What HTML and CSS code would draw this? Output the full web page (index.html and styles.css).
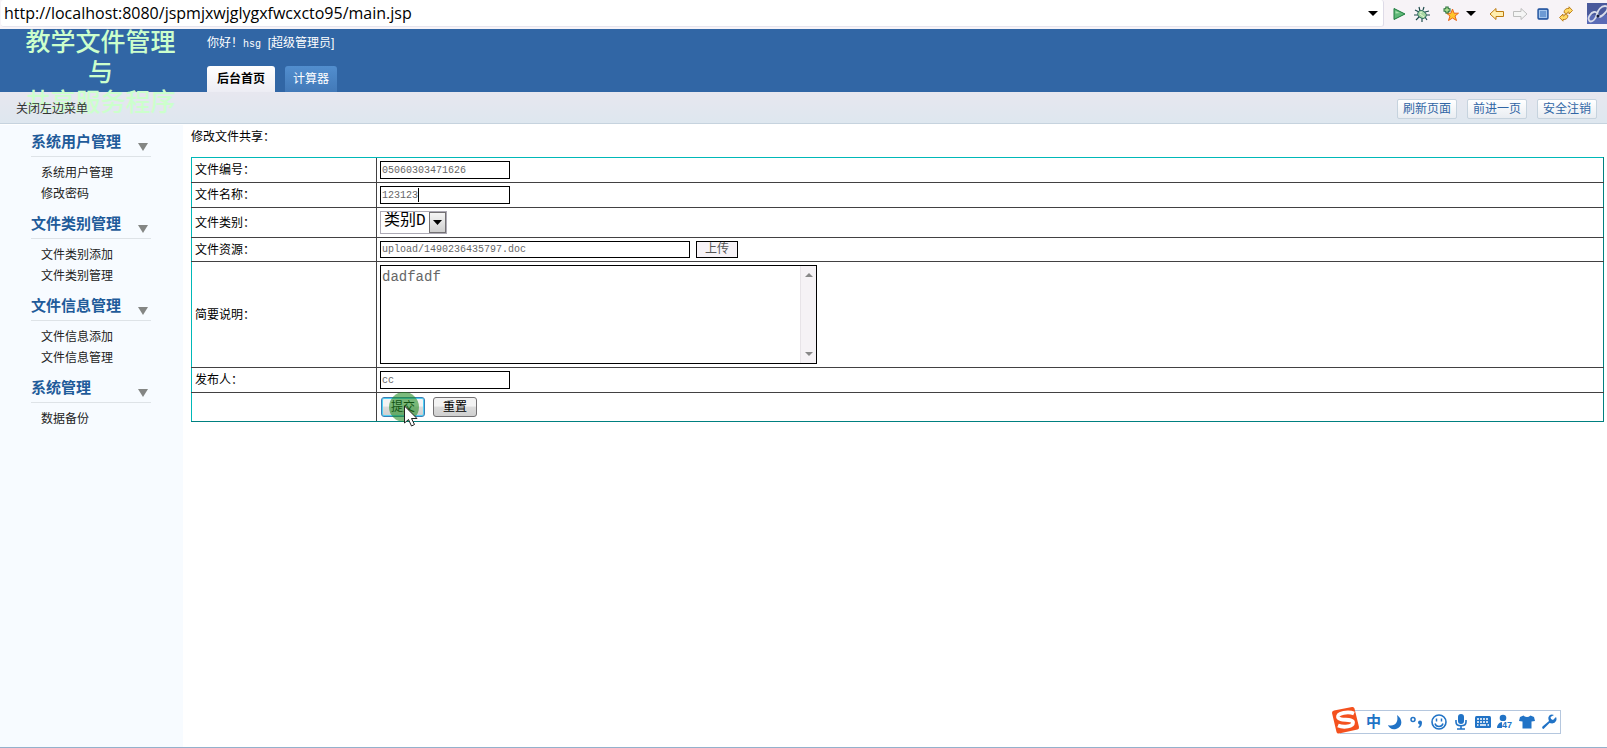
FILE: index.html
```html
<!DOCTYPE html>
<html lang="zh-CN">
<head>
    <meta charset="UTF-8">
    <meta name="viewport" content="width=device-width, initial-scale=1.0">
    <title>教学文件管理与共享服务程序</title>
    <link rel="stylesheet" href="styles.css">
</head>
<body>
    <!-- Address bar -->
    <div class="browser-bar">
        <div class="address">
            <input type="text" class="address-input" aria-label="URL" value="http://localhost:8080/jspmjxwjglygxfwcxcto95/main.jsp">
            <button type="button" class="tool" aria-label="History"><svg width="10" height="5" viewBox="0 0 10 5"><path d="M0 0h10L5 5z"/></svg></button>
        </div>
        <div class="tools">
            <button type="button" class="tool" aria-label="Go">
                <svg width="16" height="16" viewBox="0 0 16 16"><path d="M3 2.5v11L14 8z" fill="#5fb878" stroke="#1c7a3c"/><path d="M4.500 5v2.500L9 7z" fill="#a8e0ae"/></svg>
            </button>
            <button type="button" class="tool" aria-label="Debug">
                <svg width="16" height="16" viewBox="0 0 16 16"><path d="M5 1l1 4M10 1L9 4M1 4l4 2M15 5l-4 1M0 9h4M16 9h-4M2 14l3-3M8 16v-4M13 14l-2-3" fill="none" stroke="#1e4b4c" stroke-width="1.200"/><ellipse cx="8" cy="8.500" rx="4.500" ry="3.600" transform="rotate(35 8 8.500)" fill="#a9d8a4" stroke="#26645a"/><path d="M6 8l4 3M6 7l2-1" stroke="#e4f5d4"/></svg>
            </button>
            <div class="tool-group">
                <button type="button" class="tool" aria-label="Add favorite">
                    <svg width="16" height="16" viewBox="0 0 16 16"><path d="M9.500 3l1.500 4.200h4.500l-3.500 2.800 1.500 4.500-4-2.500-4 2.500L7 10 3.500 7.200H8z" fill="#ffc52b" stroke="#e8661c"/><path d="M4 0.500v7M0.500 4h7" stroke="#28713a" stroke-width="3.400"/><path d="M4 1.500v5M1.500 4h5" stroke="#b8e596" stroke-width="1.300"/></svg>
                </button>
                <button type="button" class="tool" aria-label="Favorites"><svg width="10" height="5" viewBox="0 0 10 5"><path d="M0 0h10L5 5z"/></svg></button>
            </div>
            <div class="tool-group">
                <button type="button" class="tool" aria-label="Back">
                    <svg width="16" height="16" viewBox="0 0 16 16"><path d="M1 8l6-5.500v3h7.500v5H7v3z" fill="#ffeeb0" stroke="#bd7b10" stroke-linejoin="round"/></svg>
                </button>
                <button type="button" class="tool" aria-label="Forward">
                    <svg width="16" height="16" viewBox="0 0 16 16"><path d="M15 8L9 2.500v3H1.500v5H9v3z" fill="#f5f5f5" stroke="#bebebe" stroke-linejoin="round"/></svg>
                </button>
                <button type="button" class="tool" aria-label="Stop">
                    <svg width="16" height="16" viewBox="0 0 16 16"><rect x="3" y="3" width="10" height="10" rx="1" fill="#6d9ad4" stroke="#1d4e9a" stroke-width="1.300"/><rect x="4.500" y="4.500" width="7" height="7" fill="none" stroke="#a4c5ec"/></svg>
                </button>
                <button type="button" class="tool" aria-label="Refresh">
                    <svg width="16" height="16" viewBox="0 0 16 16"><path d="M6 6.500c0-3 2.500-4.500 5-4V.8l3.500 3.700L11 8V6c-1.500 0-2 .5-2 2zM10 9.500c0 3-2.500 4.500-5 4v1.700L1.500 11.500 5 8v2c1.500 0 2-.5 2-2z" fill="#ffda65" stroke="#b87814" stroke-width=".9" stroke-linejoin="round"/></svg>
                </button>
            </div>
            <svg class="brand" width="20" height="21" viewBox="0 0 20 21"><rect width="20" height="21" fill="#4a5a9c"/><path d="M0 12h20v9H0z" fill="#5a6bb5"/><path d="M2 18c4 2 7-3 8-7S14 3 18 3s3 4 0 7-5 5-7 3M11 12C9 7 5 9 3 12s-2 5 0 6" fill="none" stroke="#d8dcea" stroke-width="1.800"/><circle cx="11" cy="13" r="1.500" fill="#101838"/></svg>
        </div>
    </div>

    <header class="header">
        <h1 class="logo">教学文件管理<br>与<br>共享服务程序</h1>
        <div class="header-main">
            <p class="greeting">你好！<span class="latin">hsg</span>&nbsp; [超级管理员]</p>
            <nav class="tabs">
                <a href="#" class="tab active">后台首页</a>
                <a href="#" class="tab">计算器</a>
            </nav>
        </div>
    </header>

    <div class="subbar">
        <a href="#" class="toggle-menu">关闭左边菜单</a>
        <div class="actions">
            <button type="button" class="action-btn">刷新页面</button>
            <button type="button" class="action-btn">前进一页</button>
            <button type="button" class="action-btn">安全注销</button>
        </div>
    </div>

    <div class="content">
        <aside class="sidebar">
            <section class="menu">
                <h2 class="menu-title">系统用户管理<span class="arrow"></span></h2>
                <ul class="menu-list">
                    <li><a href="#">系统用户管理</a></li>
                    <li><a href="#">修改密码</a></li>
                </ul>
            </section>
            <section class="menu">
                <h2 class="menu-title">文件类别管理<span class="arrow"></span></h2>
                <ul class="menu-list">
                    <li><a href="#">文件类别添加</a></li>
                    <li><a href="#">文件类别管理</a></li>
                </ul>
            </section>
            <section class="menu">
                <h2 class="menu-title">文件信息管理<span class="arrow"></span></h2>
                <ul class="menu-list">
                    <li><a href="#">文件信息添加</a></li>
                    <li><a href="#">文件信息管理</a></li>
                </ul>
            </section>
            <section class="menu">
                <h2 class="menu-title">系统管理<span class="arrow"></span></h2>
                <ul class="menu-list">
                    <li><a href="#">数据备份</a></li>
                </ul>
            </section>
        </aside>

        <main class="main">
            <p class="page-title">修改文件共享：</p>
            <form onsubmit="return false">
                <table class="form-table">
                    <tr>
                        <td><label for="bianhao">文件编号：</label></td>
                        <td><input type="text" id="bianhao" class="field" value="05060303471626"></td>
                    </tr>
                    <tr>
                        <td><label for="mingcheng">文件名称：</label></td>
                        <td><span class="field-wrap"><input type="text" id="mingcheng" class="field" value="123123"><span class="caret"></span></span></td>
                    </tr>
                    <tr class="row-select">
                        <td><label for="leibie">文件类别：</label></td>
                        <td>
                            <span class="select-wrap">
                                <select id="leibie" class="select"><option>类别D</option></select>
                                <span class="select-btn"><svg width="9" height="5" viewBox="0 0 9 5"><path d="M0 0h9L4.500 5z"/></svg></span>
                            </span>
                        </td>
                    </tr>
                    <tr class="row-file">
                        <td><label for="ziyuan">文件资源：</label></td>
                        <td>
                            <div class="cell-row">
                                <input type="text" id="ziyuan" class="field field-long" value="upload/1490236435797.doc">
                                <button type="button" class="upload-btn">上传</button>
                            </div>
                        </td>
                    </tr>
                    <tr>
                        <td><label for="shuoming">简要说明：</label></td>
                        <td>
                            <div class="area-wrap">
                                <textarea id="shuoming" class="area">dadfadf</textarea>
                                <span class="scroll">
                                    <svg width="8" height="4" viewBox="0 0 8 4"><path d="M0 4h8L4 0z" fill="#888"/></svg>
                                    <svg width="8" height="4" viewBox="0 0 8 4"><path d="M0 0h8L4 4z" fill="#888"/></svg>
                                </span>
                            </div>
                        </td>
                    </tr>
                    <tr>
                        <td><label for="faburen">发布人：</label></td>
                        <td><input type="text" id="faburen" class="field" value="cc"></td>
                    </tr>
                    <tr class="row-submit">
                        <td></td>
                        <td>
                            <div class="buttons">
                                <div class="submit-wrap">
                                    <button type="submit" class="btn btn-focus">提交</button>
                                    <svg class="pointer" width="30" height="36" viewBox="0 0 30 36"><circle cx="15" cy="15" r="15" fill="#1f8b1f" fill-opacity=".58"/><path d="M15.500 14v17l4-3.500 3 6.500 3-1.500-3-6h5.500z" fill="#fff" stroke="#222"/></svg>
                                </div>
                                <button type="reset" class="btn">重置</button>
                            </div>
                        </td>
                    </tr>
                </table>
            </form>
        </main>
    </div>

    <!-- Input method bar -->
    <div class="ime">
        <svg class="ime-logo" width="30" height="28" viewBox="0 0 30 28"><path d="M4 4.500L22 1q2-.4 2.500 1.500L29 21q.3 2-1.500 2.500L9 27.500q-2 .3-2.500-1.500L2 7q-.3-2 2-2.500z" fill="#f4511e"/><path d="M24 7.500C18 5 7.500 7 8 11c.7 4.500 15 1 15 5.500 0 4-9 5.500-15 3" fill="none" stroke="#fff" stroke-width="3.800"/></svg>
        <span class="ime-lang">中</span>
        <svg width="16" height="16" viewBox="0 0 16 16"><path d="M10 1c6 4 6 12-1 14-4 1-7-1-8-4 6 2 11-2 9-10z" fill="#2173c6"/></svg>
        <svg width="16" height="16" viewBox="0 0 16 16"><circle cx="4" cy="5.500" r="2" fill="none" stroke="#2173c6" stroke-width="1.500"/><path d="M9 8.500a2 2 0 1 1 4 0q0 4-3 5.500l-1-1q2-1 1.500-2.500Q9 10 9 8.500z" fill="#2173c6"/></svg>
        <svg width="16" height="16" viewBox="0 0 16 16"><circle cx="8" cy="8" r="7" fill="none" stroke="#2173c6" stroke-width="1.600"/><path d="M5.500 4.500v3M10.500 4.500v3M4 9.500c1 4 7 4 8 0" fill="none" stroke="#2173c6" stroke-width="1.500"/></svg>
        <svg width="16" height="16" viewBox="0 0 16 16"><rect x="5" y="0" width="6" height="10" rx="3" fill="#2173c6"/><path d="M3 6v2c0 5 10 5 10 0V6M8 12v3M4 15h8" fill="none" stroke="#2173c6" stroke-width="1.600"/></svg>
        <svg width="16" height="16" viewBox="0 0 16 16"><rect y="2" width="16" height="12" rx="1.500" fill="#2173c6"/><path d="M2 5h12M2 8h12" stroke="#fff" stroke-width="1.600" stroke-dasharray="2 1"/><path d="M2 11h1.500M5 11h6M12.500 11H14" stroke="#fff" stroke-width="1.600"/></svg>
        <span class="ime-user"><svg width="16" height="16" viewBox="0 0 16 16"><circle cx="6" cy="4" r="3.300" fill="#2173c6"/><path d="M0 14c0-8 12-8 12-2v2z" fill="#2173c6"/></svg><span class="ime-count">47</span></span>
        <svg width="16" height="16" viewBox="0 0 16 16"><path d="M4.500 1.500q3.500 3 7 0L15 3l1 4-3.500.5v7h-9v-7L0 7l1-4z" fill="#2173c6"/></svg>
        <svg width="16" height="16" viewBox="0 0 16 16"><path d="M13 1q-4-1.500-5.500 2Q7 5 8 7l-6.500 5.500q-1 2 1 2.500l6-6q5 1.500 6.500-2 1-2 0-4l-3 3-2-1-.5-2z" fill="#2173c6"/></svg>
    </div>
</body>
</html>
```
FILE: styles.css
```css
* {
    box-sizing: border-box;
}
body {
    margin: 0;
    min-height: 100vh;
    display: flex;
    flex-direction: column;
    background: #fff;
    border-bottom: 1px solid #94b1cc;
    color: #000;
    font-family: "Liberation Sans", "Noto Sans CJK SC", sans-serif;
    font-size: 12px;
    line-height: 20px;
}
h1, h2, p, ul {
    margin: 0;
    padding: 0;
}
a {
    color: inherit;
    text-decoration: none;
}
button, input, select, textarea {
    margin: 0;
    padding: 0;
    font-family: inherit;
    font-size: 12px;
}
svg {
    display: block;
}

/* address bar */
.browser-bar {
    display: flex;
    height: 29px;
    background: #f7f3f7;
}
.address {
    flex: 1;
    display: flex;
    align-items: center;
    height: 27px;
    margin-left: 1px;
    padding-right: 5px;
    background: #fff;
    border-right: 1px solid #dedbe7;
    border-bottom: 1px solid #e7e5ee;
    border-radius: 3px;
}
.address-input {
    flex: 1;
    height: 26px;
    padding-left: 3px;
    border: none;
    outline: none;
    background: none;
    font-family: "Open Sans", "Noto Sans", sans-serif;
    font-size: 16px;
}
.tool {
    border: none;
    background: none;
}
.tools {
    display: flex;
    align-items: center;
    gap: 7px;
    height: 27px;
    padding-left: 7px;
}
.tool-group {
    display: flex;
    align-items: center;
    gap: 7px;
    margin-left: 6px;
}
.brand {
    margin-left: 6px;
}

/* header */
.header {
    display: flex;
    height: 63px;
    background: #3166a5;
    color: #fff;
}
.logo {
    position: relative;
    z-index: 1;
    width: 201px;
    margin-top: -2px;
    color: #ccffcc;
    font-size: 25px;
    font-weight: 500;
    line-height: 30px;
    text-align: center;
}
.header-main {
    display: flex;
    flex-direction: column;
    justify-content: space-between;
    padding: 4px 6px 0;
}
.latin {
    font-family: "Liberation Mono", monospace;
    font-size: 10px;
}
.tabs {
    display: flex;
    gap: 10px;
}
.tab {
    height: 26px;
    padding: 0 8px;
    border-radius: 3px 3px 0 0;
    background: linear-gradient(#528ece, #4279b8);
    line-height: 26px;
}
.tab.active {
    padding: 0 10px;
    background: linear-gradient(#fff, #ededf4);
    color: #000;
    font-weight: bold;
}

/* bar under header */
.subbar {
    display: flex;
    justify-content: space-between;
    align-items: center;
    height: 32px;
    padding: 3px 10px 0 16px;
    background: linear-gradient(#e7e7ef, #dee7ef);
    border-bottom: 1px solid #c6d3de;
}
.toggle-menu {
    position: relative;
    z-index: 2;
    color: #333;
}
.actions {
    display: flex;
    gap: 10px;
}
.action-btn {
    width: 60px;
    height: 20px;
    border: 1px solid #c6d3de;
    border-radius: 2px;
    background: linear-gradient(#fff, #e9edf2);
    color: #3166a5;
    line-height: 18px;
}

.content {
    flex: 1;
    display: flex;
    padding-top: 1px;
}

/* left menu */
.sidebar {
    width: 183px;
    padding-left: 31px;
    background: #f7fbff;
}
.menu {
    width: 120px;
    margin-bottom: 2px;
}
.menu-title {
    display: flex;
    justify-content: space-between;
    height: 32px;
    padding: 3px 3px 0 0;
    border-bottom: 1px solid #dee3e7;
    color: #1f5b9a;
    font-size: 15px;
    line-height: 28px;
}
.arrow {
    height: 8px;
    margin-top: 15px;
    border-top: 8px solid #848684;
    border-left: 5px solid transparent;
    border-right: 5px solid transparent;
}
.menu-list {
    padding: 6px 0 0 10px;
    list-style: none;
    color: #222;
    line-height: 21px;
}

/* edit form */
.main {
    flex: 1;
    padding: 2px 3px 0 8px;
}
.page-title {
    margin-bottom: 10px;
}
.form-table {
    width: 100%;
    border-collapse: collapse;
    border: 1px solid #008080;
    border-top-color: #00b8b8;
    border-left-color: #00b8b8;
}
.form-table tr {
    height: 25px;
}
.form-table td {
    padding: 3px;
    border-bottom: 1px solid #424142;
    line-height: 16px;
}
.form-table td + td {
    border-left: 1px solid #424142;
}
.form-table tr:last-child td {
    border-bottom-color: #008080;
}
.form-table tr:first-child td {
    border-top: 1px solid #00b8b8;
}
.form-table td:first-child {
    width: 185px;
    border-left: 1px solid #00b8b8;
}
.form-table td:last-child {
    border-right: 1px solid #008080;
}
.field {
    display: block;
    width: 130px;
    height: 18px;
    padding: 0 1px;
    border: 1px solid #000;
    background: #fff;
    color: #666;
    font-family: "Liberation Mono", monospace;
    font-size: 10px;
}
.field-wrap, .select-wrap {
    display: block;
    position: relative;
    width: max-content;
}
.caret {
    position: absolute;
    left: 38px;
    top: 2px;
    width: 1px;
    height: 14px;
    background: #000;
}
.select {
    display: block;
    width: 67px;
    height: 23px;
    padding: 0 0 2px 3px;
    appearance: none;
    border: 1px solid #adaab5;
    border-radius: 0;
    background: #fff;
    color: #000;
    font-family: "Liberation Mono", "Noto Sans CJK SC", monospace;
    font-size: 16px;
    line-height: 19px;
}
.select-btn {
    position: absolute;
    right: 1px;
    top: 1px;
    display: flex;
    align-items: center;
    justify-content: center;
    width: 17px;
    height: 21px;
    border: 1px solid #737173;
    background: linear-gradient(#f5f5f5, #cfcfcf);
    pointer-events: none;
}
.form-table .row-select {
    height: 30px;
}
.form-table .row-file {
    height: 24px;
}
.cell-row {
    display: flex;
    gap: 6px;
}
.field-long {
    width: 310px;
    height: 17px;
}
.upload-btn {
    width: 42px;
    height: 17px;
    border: 1px solid #000;
    background: #f7f3f7;
    color: #555;
    line-height: 15px;
}
.area-wrap {
    position: relative;
    width: 437px;
}
.area {
    display: block;
    width: 100%;
    height: 99px;
    padding: 3px 20px 2px 1px;
    border: 1px solid #000;
    resize: none;
    color: #666;
    font-family: "Liberation Mono", monospace;
    font-size: 14px;
    overflow: hidden;
}
.scroll {
    position: absolute;
    top: 1px;
    right: 1px;
    bottom: 1px;
    display: flex;
    flex-direction: column;
    align-items: center;
    justify-content: space-between;
    width: 16px;
    padding: 7px 0;
    border-left: 1px solid #e7e3e7;
    background: #f5f2f5;
}
.buttons {
    display: flex;
    gap: 8px;
    padding: 1px;
}
.form-table .row-submit {
    height: 29px;
}
.submit-wrap {
    position: relative;
}
.btn {
    display: block;
    width: 44px;
    height: 20px;
    border: 1px solid #737173;
    border-radius: 3px;
    background: linear-gradient(#f3f3f3 45%, #dcdcdc 50%, #cfcfcf);
    color: #000;
    line-height: 18px;
}
.btn-focus {
    border-color: #3a7fb5;
    box-shadow: inset 0 0 0 1px #4fd0f5;
}
.pointer {
    position: absolute;
    left: 8px;
    top: -5px;
    pointer-events: none;
}

/* input method bar */
.ime {
    position: absolute;
    right: 46px;
    bottom: 14px;
    display: flex;
    align-items: center;
    gap: 6px;
    height: 24px;
    padding-right: 3px;
    border: 1px solid #b5c7de;
    border-left: none;
    background: #fff;
}
.ime-logo {
    margin: -4px 0 0 -10px;
}
.ime-lang {
    color: #2173c6;
    font-size: 15px;
    font-weight: bold;
}
.ime-user {
    position: relative;
}
.ime-count {
    position: absolute;
    left: 5px;
    top: 7px;
    background: #fff;
    color: #2173c6;
    font-size: 9px;
    font-weight: bold;
    line-height: 8px;
}
```
